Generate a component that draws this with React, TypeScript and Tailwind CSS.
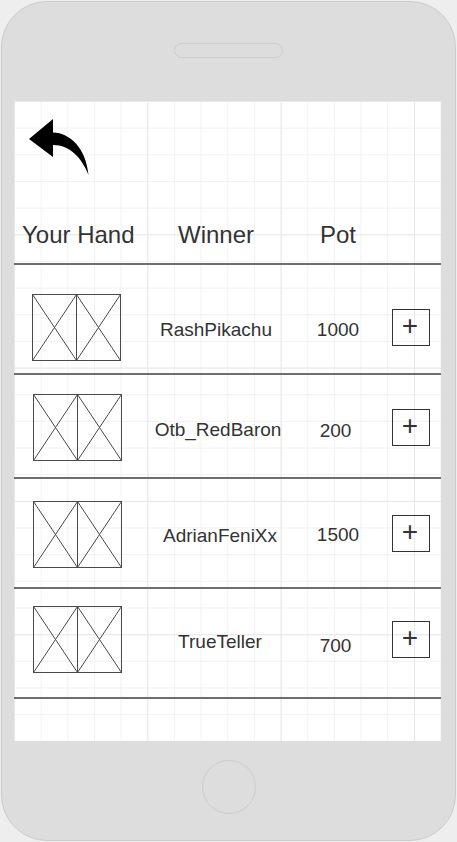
const rows = [
  { name: 'RashPikachu', pot: '1000', h: 'h-[108px]', card: 'pt-[29px] pl-[18px]', nameT: 'pt-[54px] pr-[2px]', potT: 'pt-[54px] pl-[5px]', btn: 'pt-[44px]' },
  { name: 'Otb_RedBaron', pot: '200', h: 'h-[102px]', card: 'pt-[19px] pl-[19px]', nameT: 'pt-[44px] pl-[2px]', potT: 'pt-[45px] pl-[0px]', btn: 'pt-[34px]' },
  { name: 'AdrianFeniXx', pot: '1500', h: 'h-[108px]', card: 'pt-[22px] pl-[19px]', nameT: 'pt-[46px] pl-[6px]', potT: 'pt-[45px] pl-[5px]', btn: 'pt-[36px]' },
  { name: 'TrueTeller', pot: '700', h: 'h-[108px]', card: 'pt-[17px] pl-[19px]', nameT: 'pt-[42px] pl-[6px]', potT: 'pt-[46px] pl-[0px]', btn: 'pt-[32px]' },
];

// ── Two face-down card placeholders ─────────────────────────────────────────
const Cards = () => (
  <svg width="89" height="67" viewBox="0 0 89 67" className="block">
    <g stroke="#4a4a4a" strokeWidth="1" fill="none">
      <rect x="0.5" y="0.5" width="44" height="66" />
      <rect x="44.5" y="0.5" width="44" height="66" />
      <line x1="0.5" y1="0.5" x2="44.5" y2="66.5" />
      <line x1="44.5" y1="0.5" x2="0.5" y2="66.5" />
      <line x1="44.5" y1="0.5" x2="88.5" y2="66.5" />
      <line x1="88.5" y1="0.5" x2="44.5" y2="66.5" />
    </g>
  </svg>
);

const BackArrow = () => (
  <svg width="62" height="60" viewBox="28 117 62 60" className="block">
    <path
      d="M29,139 L53,119 L53,132.5 C70,133 86,148 88.5,175 C82,158 70,145 53,145 L53,157 Z"
      fill="#000"
    />
  </svg>
);

export default function App() {
  return (
    <div className="w-[457px] h-[842px] bg-[#eeeeee] pt-px pl-px font-['Liberation_Sans',Arial,sans-serif] text-[#333333] overflow-hidden">
      <div className="w-[455px] h-[840px] rounded-[46px] border border-[#cccccc] bg-[#dddddd] flex flex-col items-center">
        {/* speaker */}
        <div className="mt-[41px] w-[109px] h-[15px] rounded-full border border-[#cccccc]" />

        {/* ── Screen ─────────────────────────────────────── */}
        <div className="mt-[43px] self-start ml-[12px] w-[427px] h-[640px] bg-white
                        [background-image:linear-gradient(to_right,#e8e8e8_1px,transparent_1px),linear-gradient(to_bottom,#e8e8e8_1px,transparent_1px),linear-gradient(to_right,#f2f2f2_1px,transparent_1px),linear-gradient(to_bottom,#f2f2f2_1px,transparent_1px)]
                        [background-size:133.33px_133.33px,133.33px_133.33px,26.667px_26.667px,26.667px_26.667px]">
          <div className="pt-[16px] pl-[14px]">
            <BackArrow />
          </div>

          {/* header */}
          <div className="h-[86px] pt-[30px] flex items-center text-[24px] leading-[28px]">
            <div className="w-[133px] pl-[8px] whitespace-nowrap">Your Hand</div>
            <div className="w-[138px] text-center">Winner</div>
            <div className="w-[106px] text-center">Pot</div>
          </div>
          <div className="h-[2px] bg-[#6e6e6e]" />

          {rows.map((r) => (
            <div key={r.name}>
              <div className={`${r.h} flex items-start text-[19px] leading-[22px]`}>
                <div className={`w-[133px] ${r.card}`}>
                  <Cards />
                </div>
                <div className={`w-[140px] text-center whitespace-nowrap ${r.nameT}`}>{r.name}</div>
                <div className={`w-[97px] text-center ${r.potT}`}>{r.pot}</div>
                <div className={`pl-[8px] ${r.btn}`}>
                  <div className="w-[38px] h-[37px] border border-[#333333] flex items-center justify-center pb-[3px] pr-[2px] text-[28px] leading-none">
                    +
                  </div>
                </div>
              </div>
              <div className="h-[2px] bg-[#6e6e6e]" />
            </div>
          ))}
        </div>

        {/* home button */}
        <div className="mt-[19px] w-[54px] h-[54px] rounded-full border border-[#cccccc]" />
      </div>
    </div>
  );
}
